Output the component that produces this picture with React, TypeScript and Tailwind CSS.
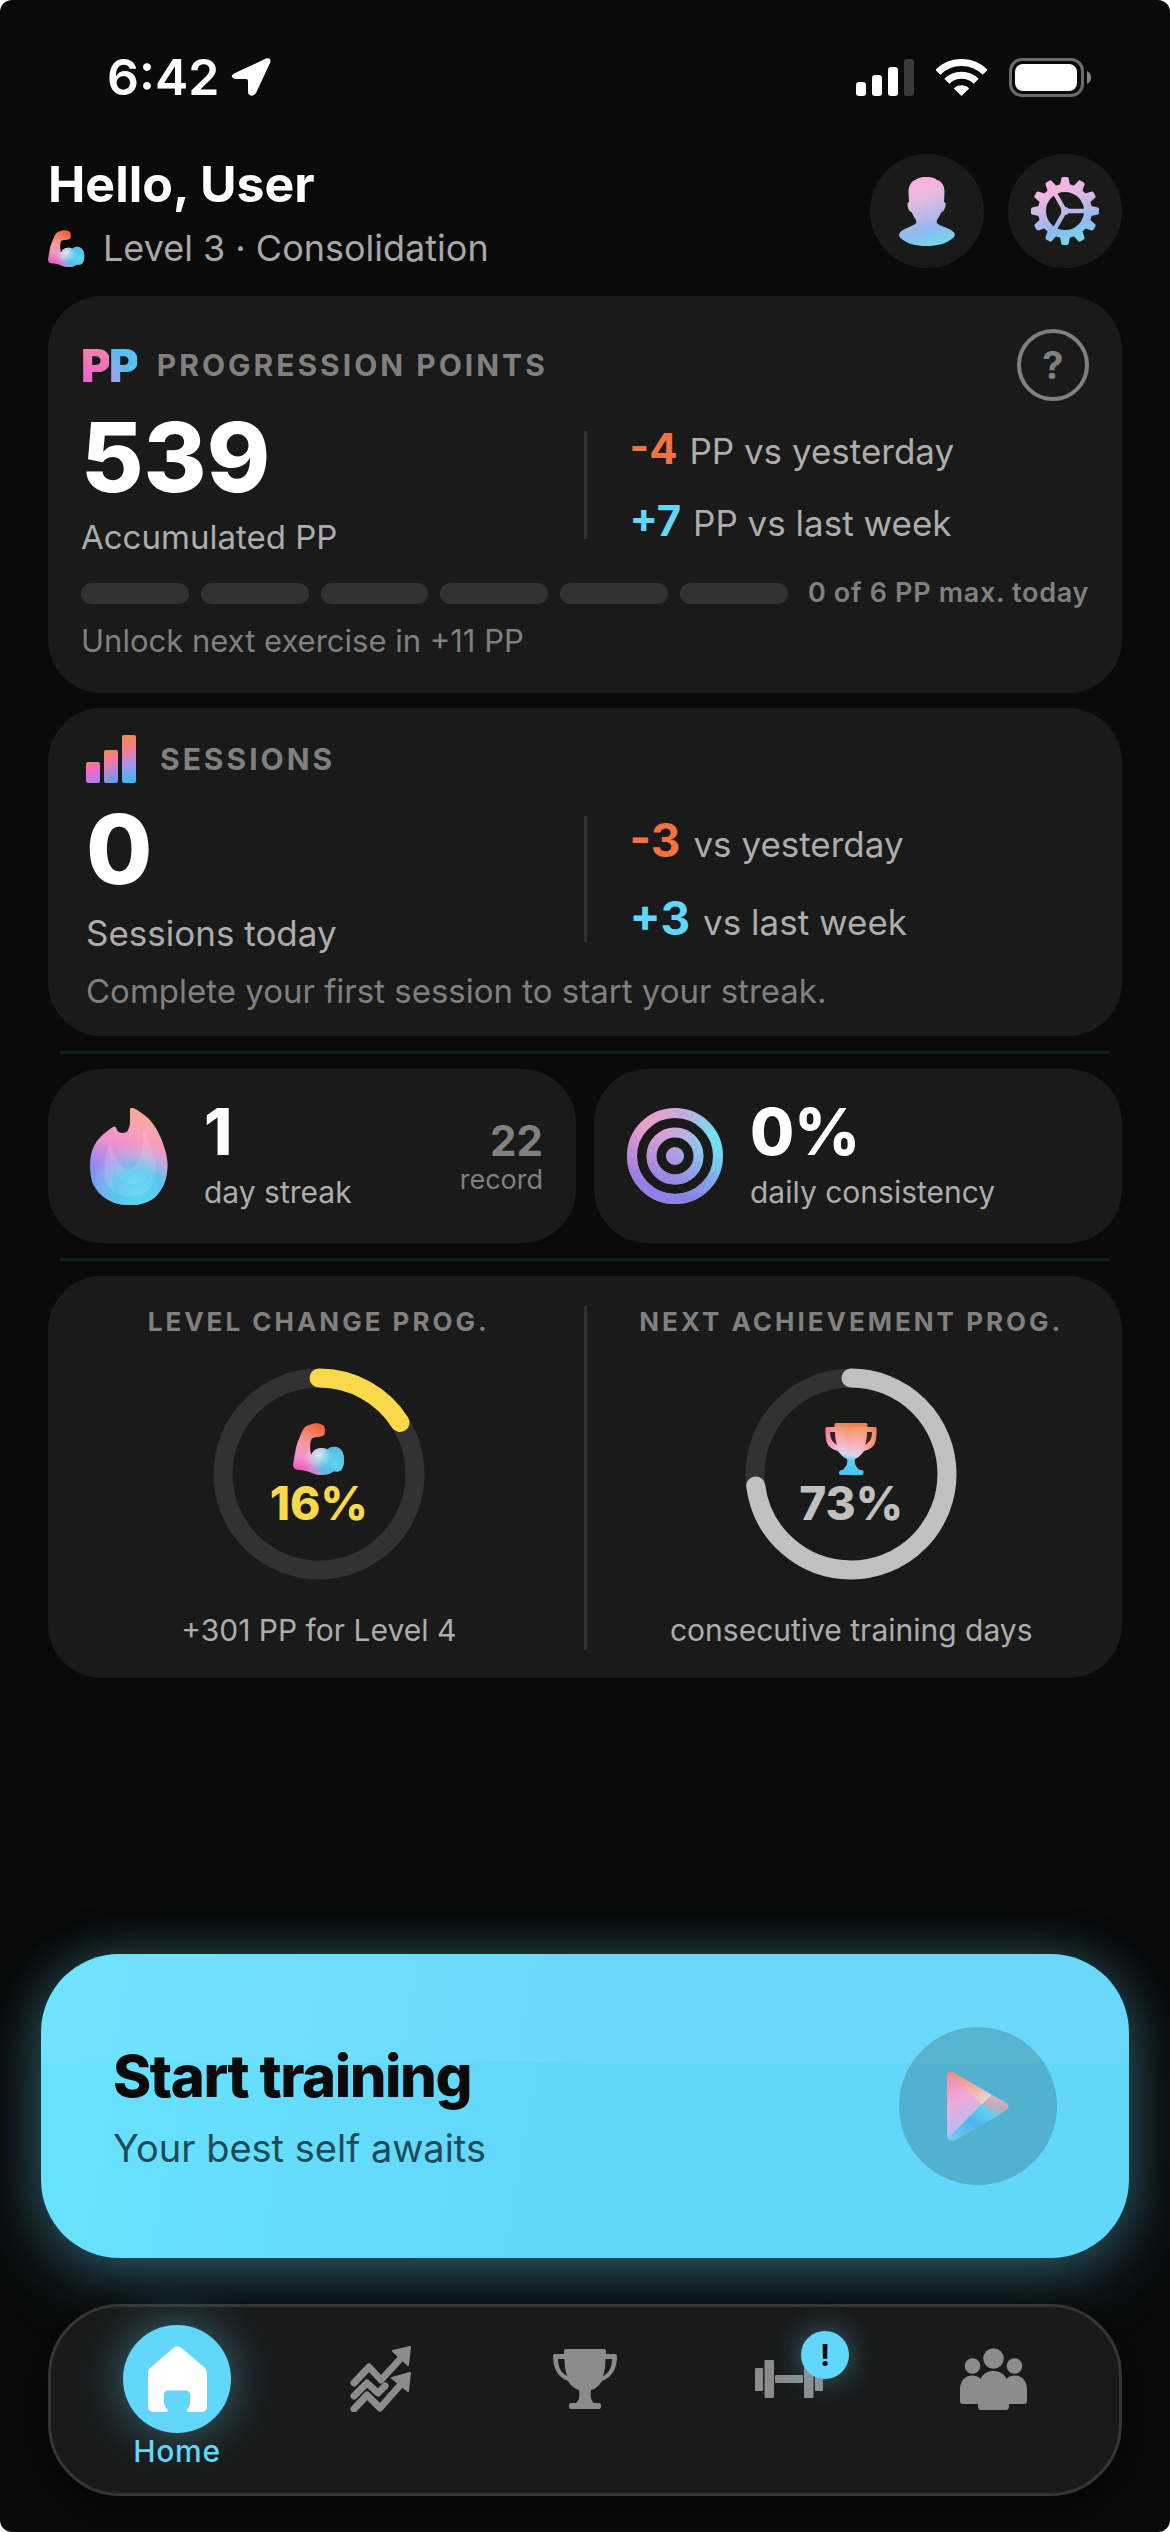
import { useId, type ReactNode } from "react";

const SEGMENTS = 6;

function LocationArrow() {
  return (
    <svg viewBox="0 0 40 38" className="w-10 h-[38px]" fill="#fff">
      <path d="M3 15.5 35 .5Q41-1 39 5L25 35Q22 39 18.500 37 17 36 17 34V23Q17 21 15 21H4Q-2 19 3 15.500Z" />
    </svg>
  );
}

function SignalIcon() {
  return (
    <svg viewBox="0 0 58 37" className="w-[58px] h-[37px]" fill="#fff">
      <rect x="0" y="23" width="10" height="14" rx="3" />
      <rect x="16" y="16" width="10" height="21" rx="3" />
      <rect x="32" y="8" width="10" height="29" rx="3" />
      <rect x="48" y="0" width="10" height="37" rx="3" fill="#3a3a3a" />
    </svg>
  );
}

function WifiIcon() {
  return (
    <svg viewBox="0 0 51 37" className="w-[51px] h-[37px]" fill="none" stroke="#fff" strokeWidth="7">
      <path d="M1.800 13.300A33.500 33.500 0 0 1 49.200 13.300" />
      <path d="M10.800 22.300A20.800 20.800 0 0 1 40.200 22.300" />
      <path d="M25.500 37 17.800 29.500A11 11 0 0 1 33.200 29.500Z" fill="#fff" stroke="none" />
    </svg>
  );
}

function BatteryIcon() {
  return (
    <svg viewBox="0 0 82 39" className="w-[82px] h-[39px]">
      <rect x="1.500" y="1.500" width="72" height="36" rx="11.500" fill="none" stroke="#6b6b6b" strokeWidth="3" />
      <rect x="6" y="6" width="62" height="27" rx="8" fill="#fff" />
      <path d="M78 13Q82 15 82 19.500T78 26Z" fill="#858585" />
    </svg>
  );
}

function PastelGradient({ id, height }: { id: string; height: number }) {
  return (
    <linearGradient id={id} gradientUnits="userSpaceOnUse" x1={height * 0.3} y1="0" x2={height * 0.62} y2={height}>
      <stop offset="0.050" stopColor="#f9b3df" />
      <stop offset="0.300" stopColor="#e6b9e0" />
      <stop offset="0.720" stopColor="#90b8ee" />
      <stop offset="1" stopColor="#6fdcec" />
    </linearGradient>
  );
}

function PersonIcon() {
  return (
    <svg viewBox="0 0 56 69" className="w-14 h-[69px]">
      <defs>
        <PastelGradient id="person" height={69} />
      </defs>
      <path
        fill="url(#person)"
        d="M27.500 0C33 0 36 1 38 3 43 4 45.500 9 45.500 15L45 25C47.500 25 47 30 44.500 34 43.500 35 42.500 34.500 42 36 41 39 38 42 37.500 45 38 49 50 50 54.500 55 56.500 57 56 59 54 61 47 67 38 69 27.500 69S8 67 1.500 61C-.5 59-.5 57 1.500 55 6 50 17 49 17.500 45 17 42 14 39 13 36 12.500 34.500 11.500 35 10.500 34 8 30 8 25 10 25L9.500 15C9.500 8 13 4 17 2.500 20 .5 23 0 27.500 0Z"
      />
    </svg>
  );
}

function GearIcon() {
  const teeth = Array.from({ length: 12 }, (_, i) => i * 30);
  return (
    <svg viewBox="0 0 68 68" className="w-[68px] h-[68px]">
      <defs>
        <PastelGradient id="gear" height={68} />
        <mask id="gear-shape">
          <g fill="#fff">
            {teeth.map((angle) => (
              <path key={angle} d="M28.500 10 30.500 1Q31 0 32 0H36Q37 0 37.500 1L39.500 10Z" transform={`rotate(${angle} 34 34)`} />
            ))}
          </g>
          <circle cx="34" cy="34" r="23" fill="none" stroke="#fff" strokeWidth="8" />
          <path d="M34 34H54M34 34 24 16.500M34 34 24 51.500" stroke="#fff" strokeWidth="4.500" />
          <circle cx="34" cy="34" r="4" fill="#fff" />
        </mask>
      </defs>
      <rect width="68" height="68" fill="url(#gear)" mask="url(#gear-shape)" />
    </svg>
  );
}

function ArmIcon({ className }: { className: string }) {
  const id = useId();
  const shape =
    "M20 .5C24-.5 28 1 30 3 31 6 31 9 30 11.500 28 13 24 13.500 20 14 17 14.500 16.500 19 16.500 24 16.500 27 17 29 17.500 30.500 20 25 24 24 28 24 30 24 32 25 33 25.500 37 22 41 22.500 43 23.500 47 25 49 30 49 35 49 40 48 45 44 46.500 42 47 40 46.500 39 46.500 35 49.500 31 50 28 50 24 50 20 49 17 47.500 12 45.500 8 45.500 4 45 1 44.500 0 42 0 40 1 36 1 32 2 29 2.500 24 4 19 6 15 8 10 10 3 15 2Z";
  return (
    <svg viewBox="0 0 50 50" className={className}>
      <defs>
        <linearGradient id={`${id}a`} x1="0.600" y1="0" x2="0.200" y2="1">
          <stop offset="0" stopColor="#f0552f" />
          <stop offset="0.180" stopColor="#f2764f" />
          <stop offset="0.450" stopColor="#f59a9e" />
          <stop offset="0.700" stopColor="#f294cc" />
          <stop offset="0.900" stopColor="#ee62c2" />
        </linearGradient>
        <radialGradient id={`${id}b`} gradientUnits="userSpaceOnUse" cx="42" cy="38" r="30">
          <stop offset="0" stopColor="#5ad6ee" />
          <stop offset="0.480" stopColor="#52bce6" />
          <stop offset="1" stopColor="#a8b8ea" stopOpacity="0" />
        </radialGradient>
        <radialGradient id={`${id}c`} gradientUnits="userSpaceOnUse" cx="25" cy="31" r="13">
          <stop offset="0" stopColor="#fff" stopOpacity="0.700" />
          <stop offset="1" stopColor="#fff" stopOpacity="0" />
        </radialGradient>
      </defs>
      <path d={shape} fill={`url(#${id}a)`} />
      <path d={shape} fill={`url(#${id}b)`} />
      <path d={shape} fill={`url(#${id}c)`} />
    </svg>
  );
}

function BarsIcon() {
  return (
    <svg viewBox="0 0 50 48" className="w-[50px] h-12">
      <defs>
        <linearGradient id="bars" gradientUnits="userSpaceOnUse" x1="22" y1="2" x2="30" y2="48">
          <stop offset="0" stopColor="#f58a4c" />
          <stop offset="0.350" stopColor="#f27a94" />
          <stop offset="0.650" stopColor="#a795ea" />
          <stop offset="1" stopColor="#45b6f4" />
        </linearGradient>
        <linearGradient id="bars-low" x1="0" y1="0" x2="0.300" y2="1">
          <stop offset="0" stopColor="#f5836a" />
          <stop offset="0.500" stopColor="#f067c8" />
          <stop offset="1" stopColor="#b57af4" />
        </linearGradient>
        <linearGradient id="bars-mid" x1="0.400" y1="0" x2="0.600" y2="1">
          <stop offset="0" stopColor="#f58650" />
          <stop offset="0.400" stopColor="#f078b4" />
          <stop offset="1" stopColor="#5c9ff4" />
        </linearGradient>
      </defs>
      <rect x="0" y="27" width="14" height="21" rx="2" fill="url(#bars-low)" />
      <rect x="18" y="15" width="14" height="33" rx="2" fill="url(#bars-mid)" />
      <rect x="36" y="0" width="14" height="48" rx="2" fill="url(#bars)" />
    </svg>
  );
}

function FlameIcon() {
  const shape =
    "M43 0C48 2 53 6 58 10 63 15 66 20 68.500 25 72 32 74 38 76 45 77 50 77.500 54 77.500 58 77 67 76 73 72 80 68 87 64 91 58 93.500 52 96.500 46 97 39 97 32 97 25 96 18.500 92 11 88 6 82 2.500 75 .5 69 0 63 0 57 0 50 1 44 4 38 7 32 11 28 15 25 18 22 21 20 24 18.500Q26 18 27 22 28 25 33 25 37 25 38 22 40 19 40 13V2Q40-1 43 0Z";
  return (
    <svg viewBox="0 0 78 97" className="w-[78px] h-[97px]">
      <defs>
        <linearGradient id="flame-base" x1="0.700" y1="0" x2="0.350" y2="1">
          <stop offset="0" stopColor="#f8ad88" />
          <stop offset="0.220" stopColor="#f6a3b4" />
          <stop offset="0.450" stopColor="#ee8fd0" />
          <stop offset="0.700" stopColor="#9b86ee" />
          <stop offset="0.900" stopColor="#5c9df4" />
        </linearGradient>
        <radialGradient id="flame-core" gradientUnits="userSpaceOnUse" cx="49" cy="86" r="52">
          <stop offset="0" stopColor="#62dcf2" />
          <stop offset="0.450" stopColor="#56c6ee" />
          <stop offset="1" stopColor="#b9c6ea" stopOpacity="0" />
        </radialGradient>
      </defs>
      <path d={shape} fill="url(#flame-base)" />
      <path d={shape} fill="url(#flame-core)" />
      <path d="M20 36C24 40 26 61 39 61 51 60 53 40 53 22 64 42 70 60 62 78 54 90 30 94 18 78 11 66 15 42 20 36Z" fill="#fff" fillOpacity="0.130" />
      <path d="M24 58C27 66 31 76 42 76 54 75 56 66 58 66 64 74 66 82 58 90 44 98 24 92 22 76Z" fill="#3fb0ee" fillOpacity="0.140" />
    </svg>
  );
}

function TargetIcon() {
  const rings = (paint: string) => (
    <g fill="none" stroke={paint} strokeWidth="10">
      <circle cx="48" cy="48" r="43" />
      <circle cx="48" cy="48" r="23.500" />
      <circle cx="48" cy="48" r="9" fill={paint} stroke="none" />
    </g>
  );
  return (
    <svg viewBox="0 0 96 96" className="w-24 h-24">
      <defs>
        <linearGradient id="target-h" gradientUnits="userSpaceOnUse" x1="18" y1="20" x2="88" y2="34">
          <stop offset="0" stopColor="#ee9fc8" />
          <stop offset="0.450" stopColor="#c8a8dc" />
          <stop offset="1" stopColor="#72e0f4" />
        </linearGradient>
        <linearGradient id="target-v" gradientUnits="userSpaceOnUse" x1="60" y1="30" x2="40" y2="92">
          <stop offset="0" stopColor="#8a7be6" stopOpacity="0" />
          <stop offset="0.850" stopColor="#8a7be6" stopOpacity="0.900" />
        </linearGradient>
      </defs>
      {rings("url(#target-h)")}
      {rings("url(#target-v)")}
    </svg>
  );
}

function GradientTrophy() {
  return (
    <svg viewBox="0 0 52 52" className="w-[52px] h-[52px]">
      <defs>
        <linearGradient id="trophy" gradientUnits="userSpaceOnUse" x1="32" y1="0" x2="22" y2="52">
          <stop offset="0" stopColor="#f27f3c" />
          <stop offset="0.250" stopColor="#f79a84" />
          <stop offset="0.480" stopColor="#f6b4d2" />
          <stop offset="0.620" stopColor="#d6d4f0" />
          <stop offset="0.720" stopColor="#5ad0ee" />
          <stop offset="1" stopColor="#4cc0f4" />
        </linearGradient>
        <linearGradient id="trophy-side" x1="0" y1="0" x2="1" y2="0">
          <stop offset="0" stopColor="#f0649c" stopOpacity="0.600" />
          <stop offset="0.450" stopColor="#fff" stopOpacity="0" />
          <stop offset="1" stopColor="#f27a54" stopOpacity="0.700" />
        </linearGradient>
      </defs>
      <path
        fill="url(#trophy)"
        d="M11 0H41Q42.500 0 42.500 1.500V4H50Q51.500 4 51.500 6 51.500 15 50 20 47 26 39 28 36 33 30 36 28.500 41 33 45.500 34.500 47 36 47 39 47 38.500 50 38.500 52 37 52H15.500Q14 52 14 50 14 47 17 47 18.500 47 19 45.500 23.500 41 22 36 16 33 13 28 5 26 2 20 .5 15 .5 6 .5 4 2 4H9.500V1.500Q9.500 0 11 0Z"
      />
      <path
        fill="url(#trophy-side)"
        d="M2 4H50Q51.500 4 51.500 6 51.500 15 50 20 47 26 39 28L36 31H16L13 28Q5 26 2 20 .5 15 .5 6 .5 4 2 4Z"
      />
      <path d="M5 9H10C10 14 10.500 18 12 22 7 19 5 15 5 9ZM47 9H42C42 14 41.500 18 40 22 45 19 47 15 47 9Z" fill="#3b2226" />
    </svg>
  );
}

function PlayIcon() {
  return (
    <svg viewBox="0 0 62 70" className="w-[62px] h-[70px]">
      <defs>
        <linearGradient id="play-left" x1="0" y1="0" x2="0.200" y2="1">
          <stop offset="0" stopColor="#f08a9c" />
          <stop offset="0.450" stopColor="#f0a8da" />
          <stop offset="1" stopColor="#a8c4f4" />
        </linearGradient>
        <linearGradient id="play-top" x1="0" y1="0" x2="1" y2="1">
          <stop offset="0" stopColor="#f4886e" />
          <stop offset="0.600" stopColor="#f2b6ae" />
          <stop offset="1" stopColor="#dfe8ea" />
        </linearGradient>
        <linearGradient id="play-bottom" x1="0" y1="1" x2="1" y2="0">
          <stop offset="0" stopColor="#7ccaf8" />
          <stop offset="0.500" stopColor="#4db4ee" />
          <stop offset="1" stopColor="#66e0ee" />
        </linearGradient>
        <linearGradient id="play-tip" x1="0.700" y1="0" x2="0.400" y2="1">
          <stop offset="0" stopColor="#dcb8c0" />
          <stop offset="0.500" stopColor="#c4a8bc" />
          <stop offset="1" stopColor="#58d4dc" />
        </linearGradient>
      </defs>
      <path d="M0 5Q0 0 5 1L35 33 3 69Q0 68 0 64Z" fill="url(#play-left)" />
      <path d="M3 1Q5 0 9 3L45 24 35 34Z" fill="url(#play-top)" />
      <path d="M1 67 35 33 49 46 8 69Q3 71 1 67Z" fill="url(#play-bottom)" />
      <path d="M45 24 58 31Q65 35 58 40L49 46 35 33Z" fill="url(#play-tip)" />
    </svg>
  );
}

function HomeIcon() {
  return (
    <svg viewBox="0 0 59 66" className="w-[59px] h-[66px]" fill="#fff">
      <path d="M26 1.500Q29.500-1 33 1.500L57 22Q59 24 59 27V60Q59 66 53 66H40.500Q37.500 66 39.500 63 42 60 42 57V49Q42 44.500 37.500 44.500H20.500Q16 44.500 16 49V57Q16 60 19 63 21 66 18 66H6Q0 66 0 60V27Q0 24 2 22Z" />
    </svg>
  );
}

function TrendIcon() {
  return (
    <svg viewBox="0 0 62 66" className="w-[62px] h-[66px]" fill="none" stroke="#8c8c8c" strokeWidth="7" strokeLinecap="round" strokeLinejoin="round">
      <path d="M4 37 19 21 31 34 52 11" />
      <path d="M4 50 17 37 28 47 35 40" />
      <path d="M4 63 17 49 30 62 52 37" />
      <path d="M43 5 60 1 58 19ZM42 32 60 27 58 45Z" fill="#8c8c8c" strokeWidth="2" />
    </svg>
  );
}

function TrophyIcon() {
  return (
    <svg viewBox="0 0 64 60" className="w-16 h-[60px]" fill="#8c8c8c">
      <path
        fillRule="evenodd"
        d="M13 0H51Q53 0 53 2V5H62Q64 5 64 7C64 18 60 28 49 32 46 37 42 40 38 41 37 47 38 52 41 54H46Q48 54 48 57T46 60H18Q16 60 16 57T18 54H23C26 52 27 47 26 41 22 40 18 37 15 32 4 28 0 18 0 7Q0 5 2 5H11V2Q11 0 13 0ZM5 10C5 18 8 24 14 27 12 21 11.500 15 11.500 10ZM59 10C59 18 56 24 50 27 52 21 52.500 15 52.500 10Z"
      />
    </svg>
  );
}

function DumbbellIcon() {
  return (
    <svg viewBox="0 0 68 38" className="w-[68px] h-[38px]" fill="#8c8c8c">
      <rect x="0" y="8" width="8" height="23" rx="1" />
      <rect x="9.500" y="0" width="9.500" height="38" rx="1" />
      <rect x="20" y="15" width="28" height="8" rx="1" />
      <rect x="49" y="0" width="9.500" height="38" rx="1" />
      <rect x="60" y="8" width="8" height="23" rx="1" />
    </svg>
  );
}

function PeopleIcon() {
  return (
    <svg viewBox="0 0 67 62" className="w-[67px] h-[62px]" fill="#8c8c8c">
      <circle cx="33.500" cy="10.500" r="10.300" />
      <circle cx="12.500" cy="18" r="7.800" />
      <circle cx="54.500" cy="18" r="7.800" />
      <path d="M0 42C0 32 6 27.500 12 27.500 16 27.500 19 29 20.500 31 23 25.500 28 23 33.500 23S44 25.500 46.500 31C48 29 51 27.500 55 27.500 61 27.500 67 32 67 42V53Q67 56 64 56H49V58Q49 62 46 62H21Q18 62 18 58V56H3Q0 56 0 53Z" />
    </svg>
  );
}

function Card({ className, children }: { className: string; children: ReactNode }) {
  return <section className={`rounded-[54px] bg-[#1a1a1a] ${className}`}>{children}</section>;
}

function Delta({ value, label }: { value: string; label: string }) {
  const color = value.startsWith("-") ? "text-[#f27244]" : "text-[#62d6fb]";
  return (
    <p className="text-[#adadad]">
      <span className={`font-bold ${color}`}>{value}</span> <span className="text-[35px] leading-none">{label}</span>
    </p>
  );
}

type RingProps = {
  title: string;
  percent: number;
  color: string;
  caption: string;
  icon: ReactNode;
};

function ProgressRing({ title, percent, color, caption, icon }: RingProps) {
  return (
    <div className="flex flex-1 flex-col items-center">
      <h2 className="text-[26px] leading-8 font-bold tracking-[3px] text-[#808080]">{title}</h2>
      <div className="relative mt-[30px] h-[212px] w-[212px]">
        <svg viewBox="0 0 212 212" className="h-full w-full -rotate-90" fill="none" strokeWidth="19">
          <circle cx="106" cy="106" r="96" stroke="#323232" />
          <circle cx="106" cy="106" r="96" stroke={color} strokeLinecap="round" pathLength="100" strokeDasharray={`${percent} 100`} />
        </svg>
        <div className="absolute inset-0 flex flex-col items-center justify-center gap-[5px]">
          {icon}
          <span className="text-[46px] leading-[46px] font-extrabold" style={{ color }}>
            {percent}%
          </span>
        </div>
      </div>
      <p className="mt-[30px] text-[30px] leading-10 text-[#adadad]">{caption}</p>
    </div>
  );
}

const tabs = [
  { name: "Progress", icon: <TrendIcon /> },
  { name: "Achievements", icon: <TrophyIcon /> },
  { name: "Exercises", icon: <DumbbellIcon />, badge: "!" },
  { name: "Community", icon: <PeopleIcon /> },
];

export default function App() {
  return (
    <div className="bg-white font-['Inter',sans-serif]">
      <div className="flex min-h-screen flex-col overflow-hidden rounded-xl bg-[#0a0a0a] text-white">
        {/* Status bar */}
        <div className="flex h-[154px] items-center justify-between pr-[79px] pl-[107px]">
          <div className="flex items-center gap-3">
            <span className="text-[50px] leading-none font-semibold">6:42</span>
            <LocationArrow />
          </div>
          <div className="flex items-center gap-[22px]">
            <SignalIcon />
            <WifiIcon />
            <BatteryIcon />
          </div>
        </div>

        {/* Greeting */}
        <header className="flex items-start justify-between px-12">
          <div>
            <h1 className="text-[50px] leading-[60px] font-bold">Hello, User</h1>
            <div className="mt-[10px] flex items-center gap-[18px]">
              <ArmIcon className="h-[37px] w-[37px]" />
              <p className="text-[36px] leading-[48px] text-[#a8a8a8]">Level 3 · Consolidation</p>
            </div>
          </div>
          <div className="flex gap-6">
            <button aria-label="Profile" className="flex h-[114px] w-[114px] items-center justify-center rounded-full bg-[#1a1a1a]">
              <PersonIcon />
            </button>
            <button aria-label="Settings" className="flex h-[114px] w-[114px] items-center justify-center rounded-full bg-[#1a1a1a]">
              <GearIcon />
            </button>
          </div>
        </header>

        <main className="mt-6 flex flex-col gap-[15px] px-12">
          {/* Progression points */}
          <Card className="px-[33px] pt-[33px] pb-8">
            <div className="flex h-[72px] items-center">
              <div aria-hidden="true" className="flex text-[46px] leading-[54px] font-black tracking-tighter">
                <span className="bg-linear-to-b from-[#f58a9a] to-[#ea55dc] bg-clip-text text-transparent">P</span>
                <span className="bg-linear-to-bl from-[#45d4ee] via-[#5cb8f0] to-[#b494e8] bg-clip-text text-transparent">P</span>
              </div>
              <h2 className="ml-5 text-[30px] font-bold tracking-[3px] text-[#808080]">PROGRESSION POINTS</h2>
              <button
                aria-label="About progression points"
                className="ml-auto flex h-[72px] w-[72px] items-center justify-center rounded-full border-[4px] border-[#808080] text-[38px] font-bold text-[#808080]"
              >
                ?
              </button>
            </div>
            <div className="mt-2 grid grid-cols-[1fr_3px_1fr] items-center">
              <div>
                <p className="text-[96px] leading-[96px] font-extrabold">539</p>
                <p className="mt-2 text-[33px] leading-[48px] text-[#adadad]">Accumulated PP</p>
              </div>
              <div className="h-[108px] bg-[#303030]" />
              <div className="pl-[43px] text-[42px] leading-[72px]">
                <Delta value="-4" label="PP vs yesterday" />
                <Delta value="+7" label="PP vs last week" />
              </div>
            </div>
            <div className="mt-3 flex items-center gap-5">
              <div className="flex flex-1 gap-3">
                {Array.from({ length: SEGMENTS }, (_, i) => (
                  <div key={i} className="h-[21px] flex-1 rounded-[10px] bg-[#323232]" />
                ))}
              </div>
              <span className="text-[27px] leading-10 font-semibold tracking-wide text-[#808080]">0 of 6 PP max. today</span>
            </div>
            <p className="mt-2 text-[31px] leading-10 text-[#808080]">Unlock next exercise in +11 PP</p>
          </Card>

          {/* Sessions */}
          <Card className="px-[38px] pt-[27px] pb-[21px]">
            <div className="flex items-center gap-6">
              <BarsIcon />
              <h2 className="text-[30px] leading-[48px] font-bold tracking-[3px] text-[#808080]">SESSIONS</h2>
            </div>
            <div className="mt-[18px] grid grid-cols-[1fr_3px_1fr] items-center">
              <div>
                <p className="text-[96px] leading-[96px] font-extrabold">0</p>
                <p className="mt-3 text-[35px] leading-[48px] text-[#adadad]">Sessions today</p>
              </div>
              <div className="h-[126px] bg-[#303030]" />
              <div className="pl-[43px] text-[46px] leading-[78px]">
                <Delta value="-3" label="vs yesterday" />
                <Delta value="+3" label="vs last week" />
              </div>
            </div>
            <p className="mt-[10px] text-[33px] leading-[48px] text-[#808080]">Complete your first session to start your streak.</p>
          </Card>

          <hr className="mx-3 h-[3px] border-0 bg-[#0f1e25]" />

          {/* Streak and consistency */}
          <div className="flex gap-[18px]">
            <Card className="flex h-[174px] flex-1 items-center px-[33px]">
              <div className="flex w-24 justify-center">
                <FlameIcon />
              </div>
              <div className="ml-[27px]">
                <p className="text-[64px] leading-[64px] font-extrabold">1</p>
                <p className="mt-2 text-[30px] leading-10 text-[#adadad]">day streak</p>
              </div>
              <div className="ml-auto text-right text-[#808080]">
                <p className="text-[42px] leading-[48px] font-bold">22</p>
                <p className="text-[27px] leading-[30px]">record</p>
              </div>
            </Card>
            <Card className="flex h-[174px] flex-1 items-center px-[33px]">
              <TargetIcon />
              <div className="ml-[27px]">
                <p className="text-[64px] leading-[64px] font-extrabold">0%</p>
                <p className="mt-2 text-[30px] leading-10 text-[#adadad]">daily consistency</p>
              </div>
            </Card>
          </div>

          <hr className="mx-3 h-[3px] border-0 bg-[#0f1e25]" />

          {/* Level and achievement progress */}
          <Card className="flex gap-[27px] px-[33px] pt-[30px] pb-7">
            <ProgressRing
              title="LEVEL CHANGE PROG."
              percent={16}
              color="#f9d84a"
              caption="+301 PP for Level 4"
              icon={<ArmIcon className="h-[52px] w-[52px]" />}
            />
            <div className="w-[3px] bg-[#303030]" />
            <ProgressRing
              title="NEXT ACHIEVEMENT PROG."
              percent={73}
              color="#c0c0c0"
              caption="consecutive training days"
              icon={<GradientTrophy />}
            />
          </Card>
        </main>

        <div className="mt-auto px-[41px]">
          <button className="flex h-[304px] w-full items-center justify-between rounded-[78px] bg-[linear-gradient(#ffffff0d_36%,transparent_36%),linear-gradient(100deg,#68e3fd,#62d6fb_50%)] px-[72px] text-left shadow-[0_0_48px_#62d6fb40,0_24px_72px_#62d6fb40]">
            <span className="flex flex-col pt-3">
              <span className="text-[58px] leading-[72px] font-extrabold tracking-tight text-[#0a0a0a]">Start training</span>
              <span className="text-[38px] leading-[72px] text-[#1f4a57]">Your best self awaits</span>
            </span>
            <span className="flex h-[158px] w-[158px] items-center justify-center rounded-full bg-[#0a0a0a]/18">
              <PlayIcon />
            </span>
          </button>
        </div>

        <nav className="relative mx-12 mt-[46px] mb-9 grid grid-cols-5 rounded-[72px] border-[3px] border-[#353535] bg-[#1a1a1a] px-6 pt-[18px] pb-6 shadow-[0_12px_48px_#00000099]">
          <button className="flex flex-col items-center">
            <span className="flex h-[108px] w-[108px] items-center justify-center rounded-full bg-[#62d6fb] shadow-[0_0_48px_#62d6fb73]">
              <HomeIcon />
            </span>
            <span className="text-[30px] leading-9 font-medium tracking-wide text-[#62d6fb]">Home</span>
          </button>
          {tabs.map((tab) => (
            <button key={tab.name} aria-label={tab.name} className="flex flex-col items-center">
              <span className="relative flex h-[108px] w-[108px] items-center justify-center">
                {tab.icon}
                {tab.badge && (
                  <span className="absolute top-[6px] -right-[6px] flex h-12 w-12 items-center justify-center rounded-full bg-[#62d6fb] text-[30px] font-bold text-[#0a0a0a] shadow-[0_0_30px_#62d6fb73]">
                    {tab.badge}
                  </span>
                )}
              </span>
            </button>
          ))}
        </nav>
      </div>
    </div>
  );
}
